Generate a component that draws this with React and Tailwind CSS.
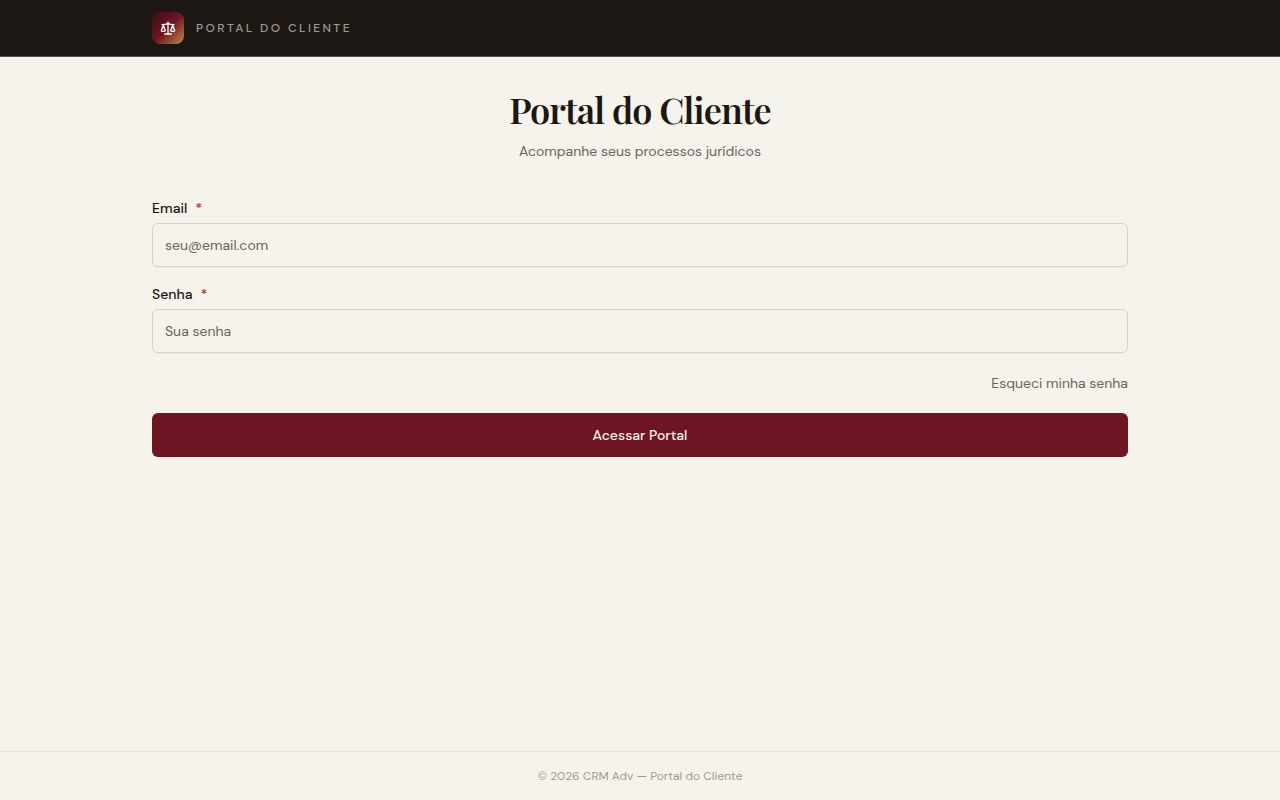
import { Scale } from "lucide-react";

function Field({ id, label, type, placeholder, autoComplete }) {
  return (
    <div className="flex flex-col gap-1">
      <label htmlFor={id} className="flex gap-2 text-sm leading-[22px] font-medium text-[#1c1713]">
        {label}
        <span aria-hidden="true" className="font-semibold text-[#b93a32]">*</span>
      </label>
      <input
        id={id}
        name={id}
        type={type}
        required
        autoComplete={autoComplete}
        placeholder={placeholder}
        className="h-11 w-full rounded-md border border-[#d8d3ca] bg-transparent px-3 text-sm text-[#1c1713] shadow-xs outline-none placeholder:text-[#6b645b] placeholder:opacity-100 focus:border-[#6d1522]"
      />
    </div>
  );
}

export default function App() {
  return (
    <div className="flex min-h-screen flex-col bg-[#f6f3ec] font-['DM_Sans',Inter,sans-serif] text-[#1c1713]">
      <header className="sticky top-0 z-50 border-b border-[#57524d] bg-[#1c1713] backdrop-blur-sm">
        <div className="mx-auto flex h-14 w-full max-w-5xl items-center gap-3 px-6">
          <div className="flex size-8 items-center justify-center rounded-lg bg-[linear-gradient(135deg,#3a0f16_0%,#6d1522_50%,#c08a48_100%)]">
            <Scale className="size-4 text-white" aria-hidden="true" />
          </div>
          <span className="text-xs font-medium tracking-[0.2em] text-[#a09a92] uppercase">
            Portal do Cliente
          </span>
        </div>
      </header>

      <main className="mx-auto flex w-full max-w-5xl grow flex-col gap-9 px-6 py-8">
        <div className="flex flex-col gap-3 text-center">
          <h1 className="font-['Playfair_Display','Liberation_Serif',serif] text-4xl font-semibold tracking-tight">
            Portal do Cliente
          </h1>
          <p className="text-sm text-[#6b645b]">Acompanhe seus processos jurídicos</p>
        </div>

        <form className="flex flex-col gap-4" onSubmit={(event) => event.preventDefault()}>
          <Field id="email" label="Email" type="email" placeholder="seu@email.com" autoComplete="email" />
          <Field id="senha" label="Senha" type="password" placeholder="Sua senha" autoComplete="current-password" />
          <div className="flex justify-end">
            <a href="#recuperar" className="py-1 text-sm text-[#6b645b] hover:underline">
              Esqueci minha senha
            </a>
          </div>
          <button
            type="submit"
            className="h-11 w-full cursor-pointer rounded-md bg-[#6d1522] text-sm font-medium text-[#f8f4ed]"
          >
            Acessar Portal
          </button>
        </form>
      </main>

      <footer className="border-t border-[#e9e5de] px-6 py-4 text-center text-xs text-[#a19b91]">
        © 2026 CRM Adv — Portal do Cliente
      </footer>
    </div>
  );
}
